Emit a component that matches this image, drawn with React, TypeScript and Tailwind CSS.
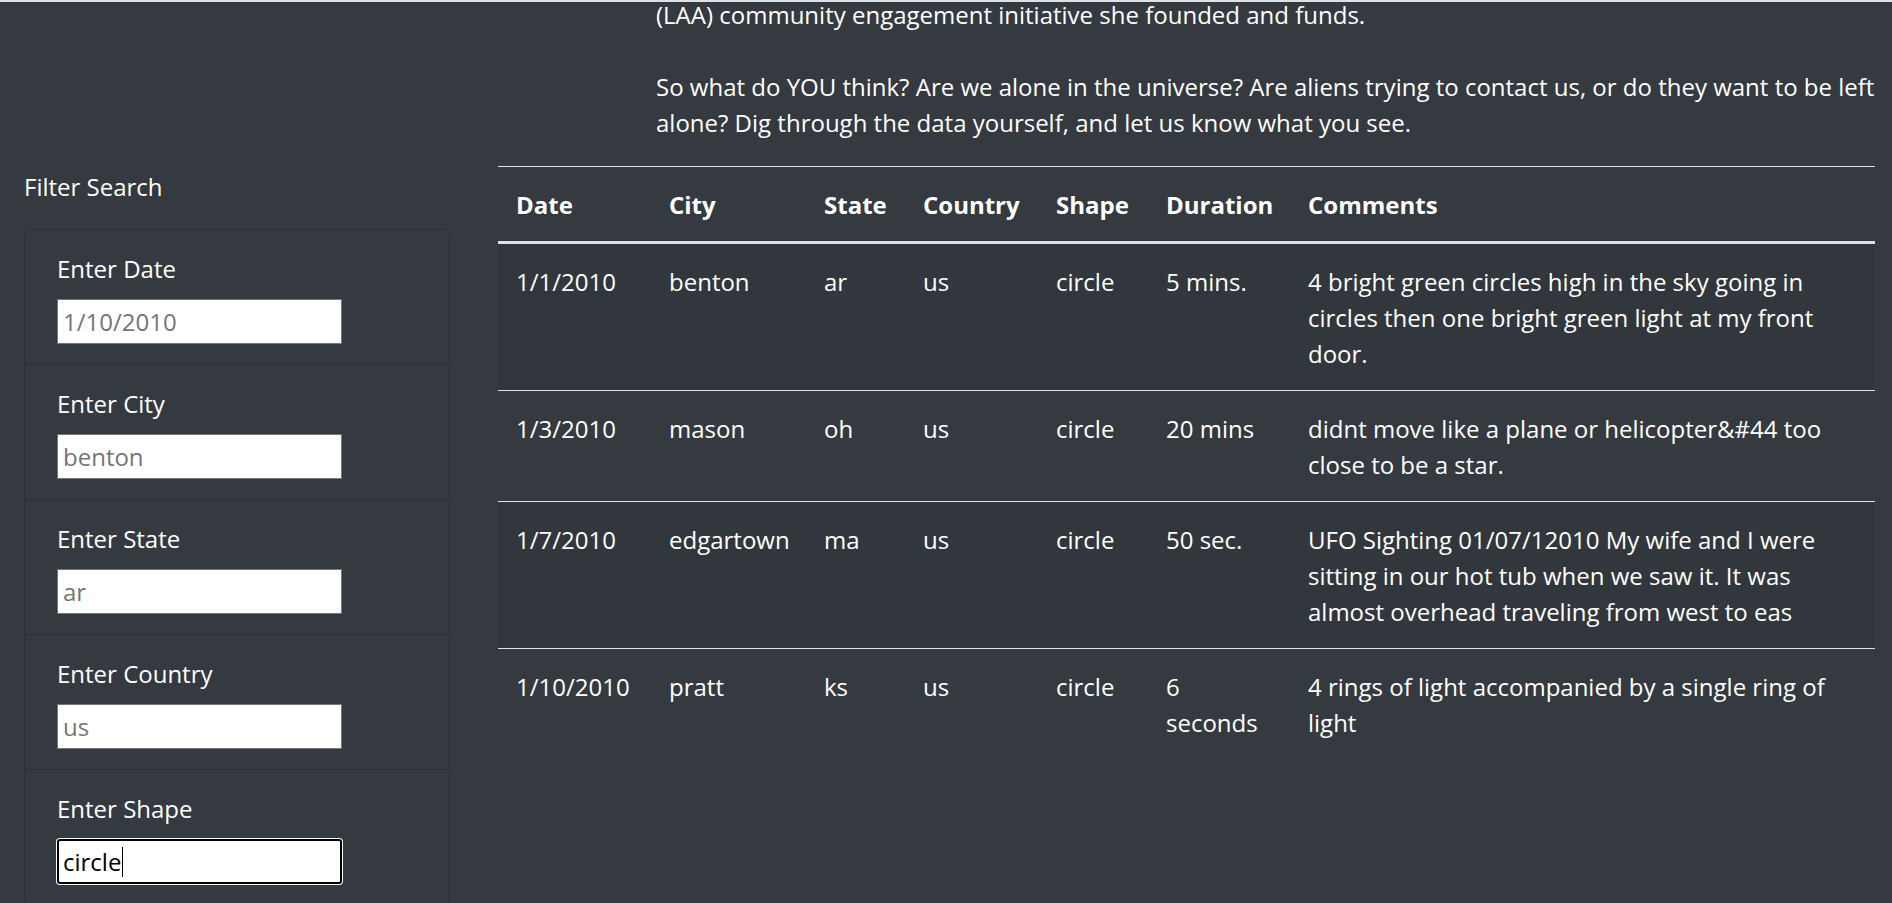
import React from 'react';

type Sighting = {
  date: string;
  city: string;
  state: string;
  country: string;
  shape: string;
  duration: string;
  comments: string;
};

const sightings: Sighting[] = [
  {
    date: '1/1/2010',
    city: 'benton',
    state: 'ar',
    country: 'us',
    shape: 'circle',
    duration: '5 mins.',
    comments: '4 bright green circles high in the sky going in circles then one bright green light at my front door.',
  },
  {
    date: '1/3/2010',
    city: 'mason',
    state: 'oh',
    country: 'us',
    shape: 'circle',
    duration: '20 mins',
    comments: 'didnt move like a plane or helicopter&#44 too close to be a star.',
  },
  {
    date: '1/7/2010',
    city: 'edgartown',
    state: 'ma',
    country: 'us',
    shape: 'circle',
    duration: '50 sec.',
    comments:
      'UFO Sighting 01/07/12010 My wife and I were sitting in our hot tub when we saw it. It was almost overhead traveling from west to eas',
  },
  {
    date: '1/10/2010',
    city: 'pratt',
    state: 'ks',
    country: 'us',
    shape: 'circle',
    duration: '6 seconds',
    comments: '4 rings of light accompanied by a single ring of light',
  },
];

const filters = [
  { label: 'Enter Date', placeholder: '1/10/2010' },
  { label: 'Enter City', placeholder: 'benton' },
  { label: 'Enter State', placeholder: 'ar' },
  { label: 'Enter Country', placeholder: 'us' },
];

const headers = ['Date', 'City', 'State', 'Country', 'Shape', 'Duration', 'Comments'];

export default function App() {
  return (
    <div className="h-[903px] overflow-hidden border-t-2 border-[#dee2e6] bg-[#343a40] text-white font-['Open_Sans','Noto_Sans',sans-serif] text-[24px] leading-[36px]">
      <div className="flex">
        {/* sidebar */}
        <aside className="w-[498px] shrink-0 pl-[24px] pr-[48px] pt-[167px]">
          <h2 className="font-normal">Filter Search</h2>
          <ul className="mt-[24px] rounded-[6px] border border-[#2c3136]">
            {filters.map((f) => (
              <li key={f.label} className="border-b border-[#2c3136] px-[32px] pt-[21px] pb-[20px]">
                <label className="block mb-[12px]">{f.label}</label>
                <input
                  type="text"
                  placeholder={f.placeholder}
                  className="block h-[45px] w-[285px] border border-[#767676] bg-white px-[5px] text-[24px] text-black placeholder:text-[#757575] outline-none"
                />
              </li>
            ))}
            <li className="px-[32px] pt-[21px] pb-[20px]">
              <label className="block mb-[12px]">Enter Shape</label>
              <div className="flex h-[45px] w-[285px] items-center rounded-[3px] border-2 border-black bg-white px-[4px] text-black shadow-[0_0_0_1px_#ffffff]">
                <span>circle</span>
                <span className="ml-px h-[30px] w-px bg-black" />
              </div>
            </li>
          </ul>
        </aside>

        {/* main column */}
        <main className="flex-1 -mt-[5px]">
          <div className="pl-[158px]">
            <p>(LAA) community engagement initiative she founded and funds.</p>
            <p className="mt-[36px]">
              So what do YOU think? Are we alone in the universe? Are aliens trying to contact us, or do they want to be
              left alone? Dig through the data yourself, and let us know what you see.
            </p>
          </div>

          <table className="mt-[25px] w-[1377px] table-fixed border-collapse text-left">
            <colgroup>
              <col className="w-[153px]" />
              <col className="w-[155px]" />
              <col className="w-[99px]" />
              <col className="w-[133px]" />
              <col className="w-[110px]" />
              <col className="w-[142px]" />
              <col />
            </colgroup>
            <thead>
              <tr>
                {headers.map((h) => (
                  <th
                    key={h}
                    className="border-t border-b-[3px] border-[#dee2e6] px-[18px] pt-[20px] pb-[18px] align-bottom font-bold"
                  >
                    {h}
                  </th>
                ))}
              </tr>
            </thead>
            <tbody>
              {sightings.map((s, i) => (
                <tr key={s.date} className={i % 2 === 0 ? 'bg-black/5' : ''}>
                  {[s.date, s.city, s.state, s.country, s.shape, s.duration, s.comments].map((v, j) => (
                    <td key={j} className="border-t border-[#dee2e6] px-[18px] pt-[20px] pb-[18px] align-top">
                      {v}
                    </td>
                  ))}
                </tr>
              ))}
            </tbody>
          </table>
        </main>
      </div>
    </div>
  );
}
